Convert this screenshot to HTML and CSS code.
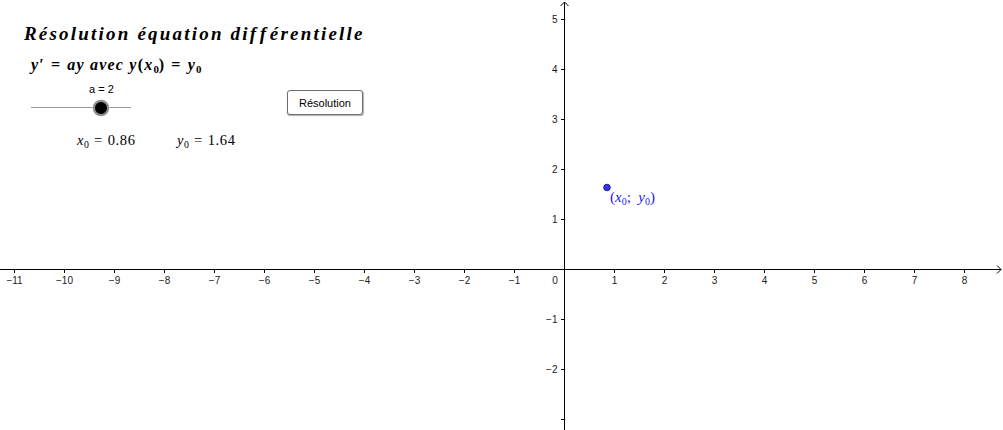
FILE: index.html
```html
<!DOCTYPE html>
<html lang="fr">
<head>
<meta charset="utf-8">
<title>Résolution équation différentielle</title>
<link rel="stylesheet" href="styles.css">
</head>
<body>
<div class="app">
  <svg class="canvas" width="1003" height="430" viewBox="0 0 1003 430" xmlns="http://www.w3.org/2000/svg">
    <g class="axes">
      <line x1="0" y1="269.5" x2="1001" y2="269.5"/>
      <line x1="564.5" y1="2" x2="564.5" y2="430"/>
      <path class="arrow" d="M997 265.5L1001 269.5L997 273.5"/>
      <path class="arrow" d="M560.5 6L564.5 2L568.5 6"/>
      <path d="M14.5 269v4M64.5 269v4M114.5 269v4M164.5 269v4M214.5 269v4M264.5 269v4M314.5 269v4M364.5 269v4M414.5 269v4M464.5 269v4M514.5 269v4M614.5 269v4M664.5 269v4M714.5 269v4M764.5 269v4M814.5 269v4M864.5 269v4M914.5 269v4M964.5 269v4"/>
      <path d="M561 19.5h3.5M561 69.5h3.5M561 119.5h3.5M561 169.5h3.5M561 219.5h3.5M561 319.5h3.5M561 369.5h3.5M561 419.5h3.5"/>
    </g>
    <g class="xlabels">
      <text x="14.5" y="284">−11</text>
      <text x="64.5" y="284">−10</text>
      <text x="114.5" y="284">−9</text>
      <text x="164.5" y="284">−8</text>
      <text x="214.5" y="284">−7</text>
      <text x="264.5" y="284">−6</text>
      <text x="314.5" y="284">−5</text>
      <text x="364.5" y="284">−4</text>
      <text x="414.5" y="284">−3</text>
      <text x="464.5" y="284">−2</text>
      <text x="514.5" y="284">−1</text>
      <text x="555" y="284">0</text>
      <text x="614.5" y="284">1</text>
      <text x="664.5" y="284">2</text>
      <text x="714.5" y="284">3</text>
      <text x="764.5" y="284">4</text>
      <text x="814.5" y="284">5</text>
      <text x="864.5" y="284">6</text>
      <text x="914.5" y="284">7</text>
      <text x="964.5" y="284">8</text>
    </g>
    <g class="ylabels">
      <text x="557.5" y="23">5</text>
      <text x="557.5" y="73">4</text>
      <text x="557.5" y="123">3</text>
      <text x="557.5" y="173">2</text>
      <text x="557.5" y="223">1</text>
      <text x="557.5" y="323">−1</text>
      <text x="557.5" y="373">−2</text>
    </g>
    <circle class="pt" cx="607" cy="187.5" r="3.3"/>
    <text class="ptlabel" x="610" y="202">(<tspan class="it">x</tspan><tspan class="sb" dy="2.5">0</tspan><tspan dy="-2.5">;  </tspan><tspan class="it">y</tspan><tspan class="sb" dy="2.5">0</tspan><tspan dy="-2.5">)</tspan></text>
  </svg>

  <div class="panel">
    <h1 class="title">Résolution équation di<span class="ff">f</span><span class="ff">f</span>érentielle</h1>
    <p class="eq"><i>y</i>′<span class="rel">=</span><i>ay avec y</i>(<i>x</i><sub>0</sub>)<span class="rel">=</span><i>y</i><sub>0</sub></p>
    <div class="controls">
      <div class="slider">
        <span class="slabel">a = 2</span>
        <div class="track">
          <span class="knob" style="left: 70%"></span>
        </div>
      </div>
      <button class="btn">Résolution</button>
    </div>
    <div class="values">
      <span class="val first"><i>x</i><sub>0</sub><span class="rel">=</span>0.86</span>
      <span class="val"><i>y</i><sub>0</sub><span class="rel">=</span>1.64</span>
    </div>
  </div>
</div>
</body>
</html>
```

FILE: styles.css
```css
html, body {
  margin: 0;
  padding: 0;
  background: #ffffff;
}

.app {
  position: relative;
  width: 1003px;
  height: 430px;
  overflow: hidden;
  background: #ffffff;
  font-family: "Liberation Sans", Arial, sans-serif;
}

.canvas {
  position: absolute;
  left: 0;
  top: 0;
  display: block;
}

.axes line,
.axes path {
  stroke: #000000;
  stroke-width: 1;
  fill: none;
}

.xlabels text,
.ylabels text {
  font-family: "Liberation Sans", Arial, sans-serif;
  font-size: 10px;
  fill: #1a1a1a;
}

.xlabels text {
  text-anchor: middle;
}

.ylabels text {
  text-anchor: end;
}

.pt {
  fill: #3333ff;
  stroke: #1a1a4d;
  stroke-width: 0.9;
}

.ptlabel {
  font-family: "Liberation Serif", "Times New Roman", serif;
  font-size: 15px;
  fill: #2020ff;
  white-space: pre;
}

.ptlabel .it {
  font-style: italic;
}

.ptlabel .sb {
  font-size: 10px;
}

/* Left panel overlaid on the graphics view */
.panel {
  position: absolute;
  left: 0;
  top: 0;
  width: 400px;
  padding-top: 24px;
  color: #000000;
}

.title {
  margin: 0 0 0 24px;
  font-family: "Liberation Serif", "Times New Roman", serif;
  font-size: 19px;
  line-height: 20px;
  font-weight: bold;
  font-style: italic;
  letter-spacing: 2.2px;
  white-space: nowrap;
}

.title .ff {
  margin-right: 1.5px;
}

.eq {
  margin: 12px 0 0 31px;
  font-family: "Liberation Serif", "Times New Roman", serif;
  font-size: 16px;
  line-height: 17px;
  font-weight: bold;
  letter-spacing: 1.2px;
  white-space: nowrap;
}

.eq i {
  font-style: italic;
}

.rel {
  margin: 0 5px;
}

.eq .rel {
  margin: 0 6px;
}

sub {
  font-size: 0.68em;
  line-height: 0;
  vertical-align: -0.28em;
  letter-spacing: 0;
}

.controls {
  display: flex;
  align-items: flex-start;
  margin-top: 10px;
  height: 32px;
}

.slider {
  margin-left: 31px;
  width: 100px;
  display: flex;
  flex-direction: column;
}

.slabel {
  margin-left: 58px;
  font-size: 11px;
  line-height: 13px;
  white-space: nowrap;
}

.track {
  position: relative;
  height: 16px;
  margin-top: 3px;
}

.track::before {
  content: "";
  position: absolute;
  left: 0;
  right: 0;
  top: 8px;
  height: 1px;
  background: #9a9a9a;
}

.knob {
  position: absolute;
  top: 0.5px;
  width: 12px;
  height: 12px;
  margin-left: -8px;
  border-radius: 50%;
  background: #000000;
  border: 2px solid #8c8c8c;
  box-shadow: 0 0 0 0.5px #c8c8c8;
}

.btn {
  margin: 7px 0 0 156px;
  width: 76px;
  height: 25px;
  padding: 0;
  box-sizing: border-box;
  border: 1px solid #6e6e6e;
  border-radius: 3px;
  background: #ffffff;
  box-shadow: 0.5px 1px 1px #b0b0b0;
  font-family: "Liberation Sans", Arial, sans-serif;
  font-size: 11px;
  color: #000000;
}

.values {
  display: flex;
  margin-top: 17px;
  font-family: "Liberation Serif", "Times New Roman", serif;
  font-size: 14.5px;
  line-height: 16px;
  letter-spacing: 0.6px;
  white-space: nowrap;
}

.val.first {
  margin-left: 77px;
  width: 100px;
}

.val i {
  font-style: italic;
}
```
